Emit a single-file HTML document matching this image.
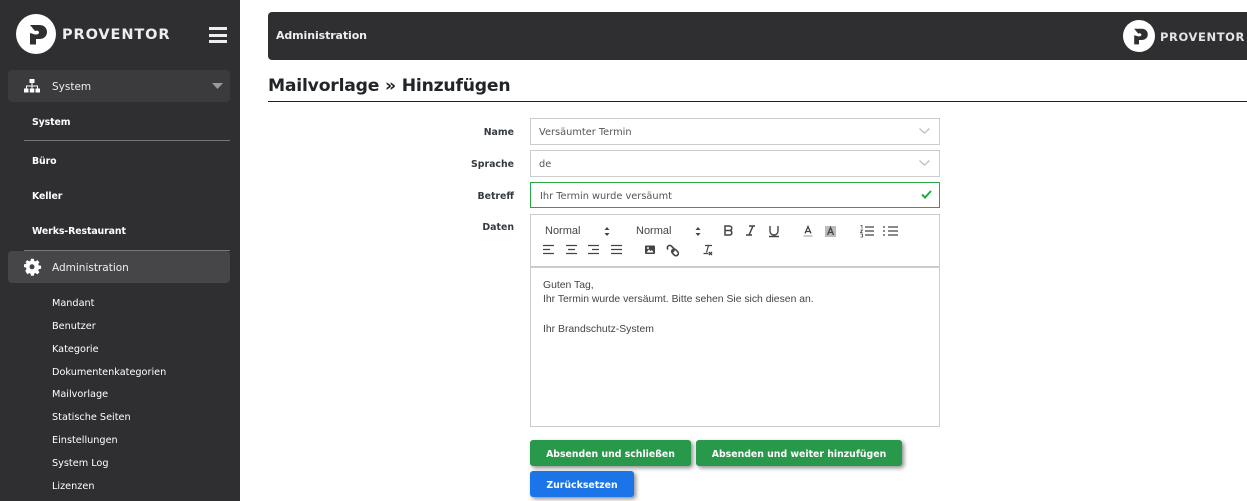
<!DOCTYPE html>
<html><head><meta charset="utf-8">
<style>
*{box-sizing:border-box}
html,body{margin:0;padding:0;width:1247px;height:501px;overflow:hidden;background:#fff;font-family:"DejaVu Sans","Liberation Sans",sans-serif}
.t{position:absolute;white-space:nowrap;line-height:14px}
.b{position:absolute}
.nav{color:#fff;font-size:9.7px;left:52px}
.grp{color:#fff;font-size:9.4px;font-weight:bold;left:32px;letter-spacing:-.1px}
.lab{color:#343a40;font-size:9.4px;font-weight:bold;text-align:right;right:733px}
.inp{position:absolute;left:530px;width:410px;border:1px solid #ccc;background:#fff}
.val{color:#555;font-size:9.8px}
.btn{position:absolute;height:26px;border-radius:3px;color:#fff;font-size:9.35px;font-weight:bold;text-align:center;line-height:29px;box-shadow:2px 2px 4px rgba(0,0,0,.45);white-space:nowrap}
.q{color:#444;font-family:"Liberation Sans",sans-serif;font-size:10.4px}
svg{position:absolute;overflow:visible}
</style></head><body>

<div class="b" style="left:0;top:0;width:240px;height:501px;background:#2f2f31"></div>

<svg style="left:16px;top:14px" width="40" height="40" viewBox="0 0 40 40"><circle cx="20" cy="20" r="20" fill="#fff"/><path d="M14 11h9.500c4.500 0 7.500 3 7.500 7s-3 7-7.500 7H20v5.500h-6V19l5 1.500c2 .3 4-.5 4-2s-2-2.500-4-1.500z" fill="#2f2f31"/></svg>
<div class="t" style="left:62px;top:26px;color:#eee;font-size:14.5px;font-weight:bold;letter-spacing:.9px;line-height:18px">PROVENTOR</div>
<div class="b" style="left:209px;top:27px;width:18px;height:3px;background:#eee"></div>
<div class="b" style="left:209px;top:34px;width:18px;height:3px;background:#eee"></div>
<div class="b" style="left:209px;top:40px;width:18px;height:3px;background:#eee"></div>

<div class="b" style="left:8px;top:70px;width:222px;height:32px;background:#3b3b3d;border-radius:4px"></div>
<svg style="left:24px;top:79px" width="16" height="14" viewBox="0 0 16 14" fill="#fff"><rect x="5.500" y="0" width="5" height="4"/><rect x="0" y="9.500" width="4.500" height="4"/><rect x="5.800" y="9.500" width="4.500" height="4"/><rect x="11.500" y="9.500" width="4.500" height="4"/><path d="M7.500 4h1v2.500h5.500v3h-1V7.500H8.500v2h-1v-2H3v2H2v-3h5.500z"/></svg>
<div class="t nav" style="top:80px;font-size:10.5px;color:#eee">System</div>
<svg style="left:212px;top:83px" width="11" height="6" viewBox="0 0 11 6"><path d="M0 0h11L5.500 6z" fill="#9a9a9a"/></svg>

<div class="t grp" style="top:116px">System</div>
<div class="b" style="left:24px;top:140px;width:206px;height:1px;background:#77777a"></div>
<div class="t grp" style="top:155px">Büro</div>
<div class="t grp" style="top:190px">Keller</div>
<div class="t grp" style="top:225px">Werks-Restaurant</div>
<div class="b" style="left:24px;top:250px;width:206px;height:1px;background:#77777a"></div>

<div class="b" style="left:8px;top:251px;width:222px;height:32px;background:#464648;border-radius:4px"></div>
<svg style="left:24px;top:259px" width="16" height="16" viewBox="0 0 16 16"><path d="M6.500 0h3l.4 2.200 1.400.6L13.200 1.500l2.100 2.100-1.300 1.900.6 1.400 2.400.4v3l-2.400.4-.6 1.400 1.300 1.900-2.100 2.100-1.900-1.300-1.400.6-.4 2.200h-3l-.4-2.200-1.400-.6-1.900 1.300L.7 12.400 2 10.500l-.6-1.400L-.6 8.700v-3l2-.2.600-1.400L.7 3.600l2.100-2.100 1.900 1.300 1.400-.6z" fill="#fff" transform="translate(.6 -.3) scale(.97 .97)"/><circle cx="8" cy="7.800" r="2.500" fill="#464648"/></svg>
<div class="t nav" style="top:261px;font-size:10.5px;color:#eee">Administration</div>

<div class="t nav" style="top:297px">Mandant</div>
<div class="t nav" style="top:320px">Benutzer</div>
<div class="t nav" style="top:343px">Kategorie</div>
<div class="t nav" style="top:366px">Dokumentenkategorien</div>
<div class="t nav" style="top:388px">Mailvorlage</div>
<div class="t nav" style="top:411px">Statische Seiten</div>
<div class="t nav" style="top:434px">Einstellungen</div>
<div class="t nav" style="top:457px">System Log</div>
<div class="t nav" style="top:480px">Lizenzen</div>

<div class="b" style="left:268px;top:12px;width:979px;height:48px;background:#2f2f31;border-radius:4px 0 0 4px"></div>
<div class="t" style="left:276px;top:29px;color:#eee;font-size:11px;font-weight:bold;letter-spacing:-.1px">Administration</div>
<svg style="left:1123px;top:20px" width="32" height="32" viewBox="0 0 40 40"><circle cx="20" cy="20" r="20" fill="#fff"/><path d="M14 11h9.500c4.500 0 7.500 3 7.500 7s-3 7-7.500 7H20v5.500h-6V19l5 1.500c2 .3 4-.5 4-2s-2-2.500-4-1.500z" fill="#2f2f31"/></svg>
<div class="t" style="left:1160px;top:29px;color:#e4e4e4;font-size:11.5px;font-weight:bold;letter-spacing:.6px;line-height:16px">PROVENTOR</div>

<div class="t" style="left:268px;top:75px;color:#212529;font-size:17.2px;font-weight:bold;line-height:22px;letter-spacing:-.2px">Mailvorlage » Hinzufügen</div>
<div class="b" style="left:268px;top:101px;width:979px;height:1px;background:#222"></div>

<div class="t lab" style="top:126px">Name</div>
<div class="inp" style="top:118px;height:27px"></div>
<div class="t val" style="left:539px;top:126px">Versäumter Termin</div>
<svg style="left:919px;top:128px" width="11" height="6" viewBox="0 0 11 6"><path d="M.5.500 5.500 5l5-4.500" fill="none" stroke="#c4c4c4" stroke-width="1.400"/></svg>

<div class="t lab" style="top:158px">Sprache</div>
<div class="inp" style="top:150px;height:27px"></div>
<div class="t val" style="left:539px;top:158px">de</div>
<svg style="left:919px;top:160px" width="11" height="6" viewBox="0 0 11 6"><path d="M.5.500 5.500 5l5-4.500" fill="none" stroke="#c4c4c4" stroke-width="1.400"/></svg>

<div class="t lab" style="top:190px">Betreff</div>
<div class="inp" style="top:182px;height:26px;border-color:#28a745"></div>
<div class="t val" style="left:540px;top:190px">Ihr Termin wurde versäumt</div>
<svg style="left:921px;top:190px" width="11" height="9" viewBox="0 0 11 9"><path d="M1 4.500 4 7.500 10 1" fill="none" stroke="#28a745" stroke-width="2"/></svg>

<div class="t lab" style="top:221px">Daten</div>
<div class="inp" style="top:214px;height:53px"></div>
<div class="inp" style="top:266px;height:161px;border-top:2px solid #ccc"></div>

<div class="t q" style="left:545px;top:224px;color:#444;font-size:11px">Normal</div>
<div class="t q" style="left:636px;top:224px;color:#444;font-size:11px">Normal</div>
<svg style="left:604px;top:227px" width="6" height="9" viewBox="0 0 6 9" fill="#444"><path d="M3 0l2.500 3h-5zM3 9L.5 6h5z"/></svg>
<svg style="left:695px;top:227px" width="6" height="9" viewBox="0 0 6 9" fill="#444"><path d="M3 0l2.500 3h-5zM3 9L.5 6h5z"/></svg>

<svg style="left:720px;top:224px" width="180" height="14" viewBox="0 0 180 14" fill="none" stroke="#444">
<path d="M5 2h4.500a2.200 2.200 0 0 1 0 4.500H5zM5 6.500h5a2.300 2.300 0 0 1 0 4.500H5zM5 2v9" stroke-width="1.500"/>
<path d="M29 2h6M26 11h6M33 2l-4 9" stroke-width="1.500"/>
<path d="M50 2v5a4 4 0 0 0 8 0V2M49 12.500h10" stroke-width="1.400"/>
<path d="M85 9.500 88 2.500l3 7M86 7.500h4" stroke-width="1.300"/><path d="M83.500 12h9" stroke="#bbb" stroke-width="1.500"/>
<rect x="105" y="2" width="11" height="11" fill="#bbb" stroke="none"/><path d="M107.500 11 110.500 3.500l3 7.500M108.500 8.500h4" stroke-width="1.300"/>
<path d="M145 3h9M145 7h9M145 11h9" stroke-width="1.300"/><path d="M140.500 1.500h1.500v3M140.500 6h2l-2 2.500h2M140.500 10h2v3h-2" stroke-width=".8"/>
<path d="M168 3h10M168 7h10M168 11h10M163 3h2M163 7h2M163 11h2" stroke-width="1.300"/>
</svg>

<svg style="left:542px;top:243px" width="180" height="14" viewBox="0 0 180 14" fill="none" stroke="#444" stroke-width="1.300">
<path d="M1 2.500h11M1 6.500h7M1 10.500h11"/>
<path d="M24 2.500h11M26 6.500h7M24 10.500h11"/>
<path d="M46 2.500h11M50 6.500h7M46 10.500h11"/>
<path d="M69 2.500h11M69 6.500h11M69 10.500h11"/>
<rect x="103" y="2.500" width="10" height="8.500" rx="1" fill="#444" stroke="none"/><path d="M104.500 9.500l2.500-3 1.500 1.500 1.500-1 1.500 2.500z" fill="#fff" stroke="none"/><circle cx="106" cy="5" r="1" fill="#fff" stroke="none"/>
<path d="M126 6.500a2.400 2.400 0 0 1 3.500-3.300l2 2a2.400 2.400 0 0 1-1 3.800M134 7a2.400 2.400 0 0 0-3.600-.2 2.400 2.400 0 0 0 0 3.400l1.800 1.800a2.400 2.400 0 0 0 3.400-3.400z" stroke-width="1.600"/>
<path d="M163 2.500h7M166.500 2.500l-2 7M161.500 10.500h5" stroke-width="1.200"/><path d="M167 9l3 3M170 9l-3 3" stroke-width="1.400"/>
</svg>

<div class="t q" style="left:543px;top:279px">Guten Tag,</div>
<div class="t q" style="left:543px;top:293px">Ihr Termin wurde versäumt. Bitte sehen Sie sich diesen an.</div>
<div class="t q" style="left:543px;top:323px">Ihr Brandschutz-System</div>

<div class="btn" style="left:530px;top:440px;width:161px;background:#28994a">Absenden und schließen</div>
<div class="btn" style="left:696px;top:440px;width:206px;background:#28994a">Absenden und weiter hinzufügen</div>
<div class="btn" style="left:530px;top:471px;width:104px;background:#1b74e8">Zurücksetzen</div>

</body></html>
